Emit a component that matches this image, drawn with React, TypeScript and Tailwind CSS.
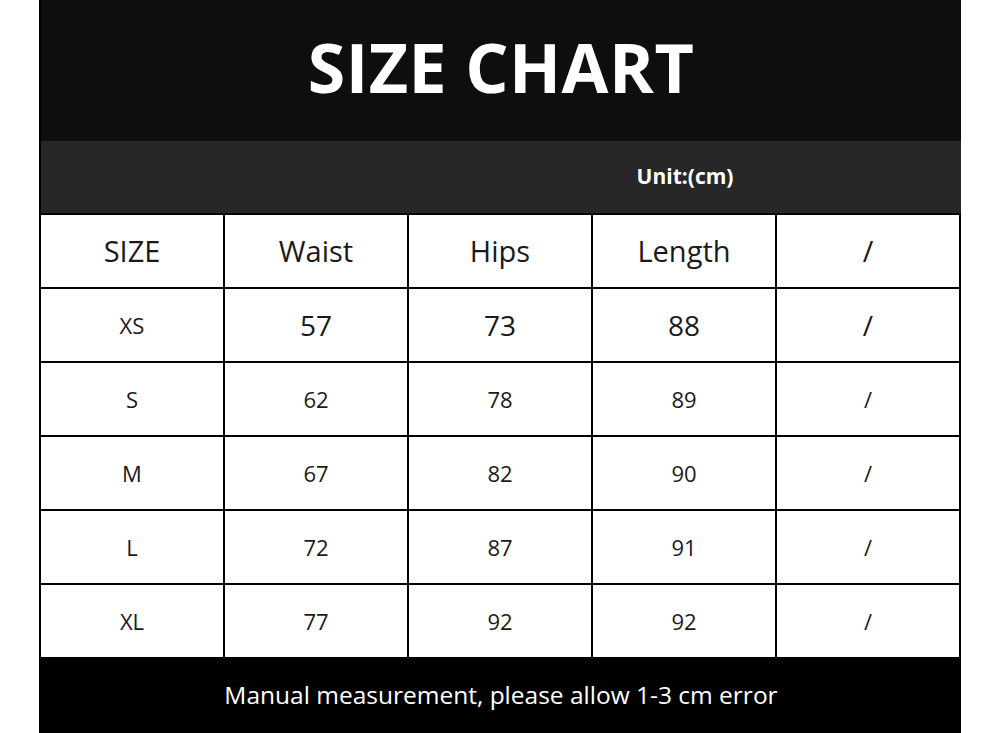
import React from 'react';

const rows = [
  { size: 'XS', waist: '57', hips: '73', length: '88', big: true },
  { size: 'S', waist: '62', hips: '78', length: '89' },
  { size: 'M', waist: '67', hips: '82', length: '90' },
  { size: 'L', waist: '72', hips: '87', length: '91' },
  { size: 'XL', waist: '77', hips: '92', length: '92' },
];

const font = { fontFamily: '"Open Sans", "Noto Sans", sans-serif' };

const Cell: React.FC<{ children: React.ReactNode; className?: string }> = ({ children, className = '' }) => (
  <div className={`h-[74px] flex items-center justify-center border-r-2 border-b-2 border-black text-[#1a1a1a] ${className}`}>
    {children}
  </div>
);

const App: React.FC = () => {
  return (
    <div className="w-[1000px] h-[733px] bg-white overflow-hidden" style={font}>
      <div className="ml-[39px] w-[922px] border-l-2 border-black">
        <div className="h-[141px] bg-[#0e0e0e] flex items-center justify-center">
          <h1 className="text-white font-bold text-[68px] leading-none tracking-[0.5px] -mt-[8px]">SIZE CHART</h1>
        </div>
        <div className="h-[74px] bg-[#272727] border-b-2 border-black grid grid-cols-[184px_184px_184px_184px_184px]">
          <div className="col-start-4 flex items-center justify-center">
            <span className="text-white font-bold text-[21px]">Unit:(cm)</span>
          </div>
        </div>
        <div className="grid grid-cols-[184px_184px_184px_184px_184px]">
          <Cell className="text-[29px]">SIZE</Cell>
          <Cell className="text-[29px]">Waist</Cell>
          <Cell className="text-[29px]">Hips</Cell>
          <Cell className="text-[29px]">Length</Cell>
          <Cell className="text-[29px]">/</Cell>
          {rows.map((r) => (
            <React.Fragment key={r.size}>
              <Cell className="text-[22px]">{r.size}</Cell>
              <Cell className={r.big ? 'text-[28px]' : 'text-[22px]'}>{r.waist}</Cell>
              <Cell className={r.big ? 'text-[28px]' : 'text-[22px]'}>{r.hips}</Cell>
              <Cell className={r.big ? 'text-[28px]' : 'text-[22px]'}>{r.length}</Cell>
              <Cell className={r.big ? 'text-[28px]' : 'text-[22px]'}>/</Cell>
            </React.Fragment>
          ))}
        </div>
        <div className="h-[76px] bg-black flex items-center justify-center -mt-[2px]">
          <span className="text-white text-[24.5px]">Manual measurement, please allow 1-3 cm error</span>
        </div>
      </div>
    </div>
  );
};

export default App;
